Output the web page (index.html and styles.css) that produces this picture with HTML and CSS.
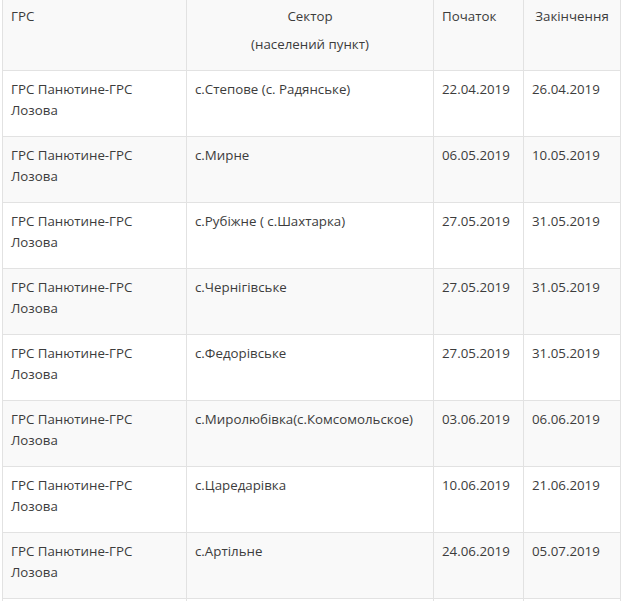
FILE: index.html
```html
<!DOCTYPE html>
<html lang="uk">
<head>
<meta charset="utf-8">
<link rel="stylesheet" href="styles.css">
</head>
<body>
<table class="schedule">
  <colgroup>
    <col class="c-grs"><col class="c-sector"><col class="c-start"><col class="c-end">
  </colgroup>
  <thead>
    <tr>
      <th class="h-left">ГРС</th>
      <th class="h-center"><div>Сектор</div><div class="sub">(населений пункт)</div></th>
      <th class="h-left">Початок</th>
      <th class="h-center">Закінчення</th>
    </tr>
  </thead>
  <tbody>
    <tr><td>ГРС Панютине-ГРС Лозова</td><td>с.Степове (с. Радянське)</td><td>22.04.2019</td><td>26.04.2019</td></tr>
    <tr><td>ГРС Панютине-ГРС Лозова</td><td>с.Мирне</td><td>06.05.2019</td><td>10.05.2019</td></tr>
    <tr><td>ГРС Панютине-ГРС Лозова</td><td>с.Рубіжне ( с.Шахтарка)</td><td>27.05.2019</td><td>31.05.2019</td></tr>
    <tr><td>ГРС Панютине-ГРС Лозова</td><td>с.Чернігівське</td><td>27.05.2019</td><td>31.05.2019</td></tr>
    <tr><td>ГРС Панютине-ГРС Лозова</td><td>с.Федорівське</td><td>27.05.2019</td><td>31.05.2019</td></tr>
    <tr><td>ГРС Панютине-ГРС Лозова</td><td>с.Миролюбівка(с.Комсомольское)</td><td>03.06.2019</td><td>06.06.2019</td></tr>
    <tr><td>ГРС Панютине-ГРС Лозова</td><td>с.Царедарівка</td><td>10.06.2019</td><td>21.06.2019</td></tr>
    <tr><td>ГРС Панютине-ГРС Лозова</td><td>с.Артільне</td><td>24.06.2019</td><td>05.07.2019</td></tr>
    <tr><td></td><td></td><td></td><td></td></tr>
  </tbody>
</table>
</body>
</html>
```
FILE: styles.css
```css
html, body {
  margin: 0;
  padding: 0;
  background: #fff;
}
body {
  padding-left: 2px;
  font-family: "Open Sans", "Noto Sans", sans-serif;
  font-size: 13.3px;
  color: #3c3c3c;
}
.schedule {
  border-collapse: collapse;
  table-layout: fixed;
  width: 618px;
}
.c-grs { width: 184px; }
.c-sector { width: 247px; }
.c-start { width: 90px; }
.c-end { width: 97px; }
.schedule th, .schedule td {
  border: 1px solid #e2e2e2;
  padding: 8px 8px 0 8px;
  vertical-align: top;
  text-align: left;
  font-weight: normal;
  line-height: 21px;
}
.schedule thead th {
  border-top: none;
  height: 64px;
  padding-top: 6px;
  background: #f9f9f9;
}
.schedule th.h-center { text-align: center; }
.schedule th .sub { margin-top: 7px; }
.schedule tbody td { height: 57px; }
.schedule tbody tr:nth-child(even) td { background: #f9f9f9; }
```
